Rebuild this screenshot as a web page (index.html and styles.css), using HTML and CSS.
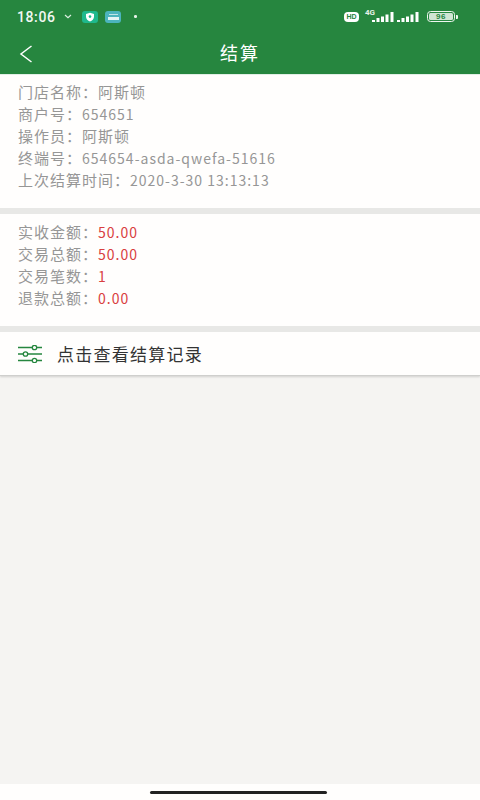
FILE: index.html
```html
<!DOCTYPE html>
<html lang="zh">
<head>
<meta charset="utf-8">
<title>结算</title>
<link rel="stylesheet" href="styles.css">
</head>
<body>
<div class="page">
  <header class="header">
    <div class="status">
      <div class="status-left">
        <span class="time">18:06</span>
        <svg class="chev" width="8" height="5" viewBox="0 0 8 5"><path d="M1 1l3 2.600L7 1" fill="none" stroke="#dcefe0" stroke-width="1.200"/></svg>
        <span class="app app-shield"><svg width="10" height="10" viewBox="0 0 10 10"><path d="M5 .8l4 1.300v2.600C9 7 7.200 8.600 5 9.400 2.800 8.600 1 7 1 4.700V2.100z" fill="#fff"/><circle cx="5" cy="4.600" r="1.300" fill="#1fb88c"/></svg></span>
        <span class="app app-news"><span class="app-line"></span><span class="app-line wide"></span></span>
        <span class="dot"></span>
      </div>
      <div class="status-right">
        <span class="hd">HD</span>
        <span class="net"><span class="net-label">4G</span>
          <svg width="22" height="10" viewBox="0 0 22 10"><path d="M0 8h3v2H0zM4.500 6h3v4h-3zM9 4.500h3V10H9zM13.500 2.500h3V10h-3zM18.500 0h3v10h-3z" fill="#fff"/></svg>
        </span>
        <svg width="22" height="10" viewBox="0 0 22 10"><path d="M0 8h3v2H0zM4.500 6h3v4h-3zM9 4.500h3V10H9zM13.500 2.500h3V10h-3zM18.500 0h3v10h-3z" fill="#fff"/></svg>
        <span class="battery"><span class="battery-level">96</span></span><span class="battery-cap"></span>
      </div>
    </div>
    <div class="nav">
      <svg class="back" width="14" height="18" viewBox="0 0 14 18"><path d="M12.500 1L2 9l10.500 8" fill="none" stroke="#fff" stroke-width="1.500"/></svg>
      <h1 class="title">结算</h1>
    </div>
  </header>

  <section class="card card-store">
    <p class="row">门店名称：阿斯顿</p>
    <p class="row">商户号：<span class="num">654651</span></p>
    <p class="row">操作员：阿斯顿</p>
    <p class="row">终端号：<span class="num">654654-asda-qwefa-51616</span></p>
    <p class="row">上次结算时间：<span class="num">2020-3-30 13:13:13</span></p>
  </section>

  <section class="card card-money">
    <p class="row">实收金额：<span class="num red">50.00</span></p>
    <p class="row">交易总额：<span class="num red">50.00</span></p>
    <p class="row">交易笔数：<span class="num red">1</span></p>
    <p class="row">退款总额：<span class="num red">0.00</span></p>
  </section>

  <div class="record">
    <svg class="filter" width="26" height="18" viewBox="0 0 26 18">
      <g fill="none" stroke="#26863f" stroke-width="1.300">
        <path d="M1 2.500h14M20 2.500h5M1 9h5M11 9h14M1 15.500h14M20 15.500h5"/>
        <circle cx="17.500" cy="2.500" r="2.200"/><circle cx="8.500" cy="9" r="2.200"/><circle cx="17.500" cy="15.500" r="2.200"/>
      </g>
    </svg>
    <span class="record-text">点击查看结算记录</span>
  </div>

  <div class="spacer"></div>
  <footer class="home-area"><span class="home-bar"></span></footer>
</div>
</body>
</html>
```
FILE: styles.css
```css
* { box-sizing: border-box; }
html, body { margin: 0; padding: 0; }
body { font-family: "Noto Sans CJK SC", sans-serif; background: #f5f4f2; }
.page { width: 480px; height: 800px; display: flex; flex-direction: column; overflow: hidden; }

.header { height: 74px; background: #26863f; color: #fff; flex: none; }
.status { height: 32px; padding: 1px 22px 0 17px; display: flex; justify-content: space-between; align-items: center; }
.status-left, .status-right { display: flex; align-items: center; }
.time { font: 500 14px/16px Roboto, sans-serif; letter-spacing: .6px; color: #f2f8f3; width: 47px; }
.chev { margin-right: 10px; }
.app { width: 16px; height: 12px; border-radius: 3px; display: flex; flex-direction: column; align-items: center; justify-content: center; gap: 2px; }
.app-shield { background: #1fb88c; }
.app-news { background: #4cb4bd; margin-left: 7px; }
.app-line { width: 9px; height: 1px; background: #bfe4e6; }
.app-line.wide { width: 11px; height: 3px; background: #e4f4f4; }
.dot { width: 2.500px; height: 2.500px; border-radius: 50%; background: #e6f2e8; margin-left: 13px; }

.status-right { gap: 3px; }
.hd { width: 15px; height: 10px; border-radius: 4px; background: #fff; color: #26863f; font: 700 7px/10px "Liberation Sans", sans-serif; text-align: center; margin-right: 10px; }
.net { display: flex; align-items: flex-end; position: relative; height: 10px; }
.net-label { position: absolute; left: -7px; top: -3px; font: 700 8px/8px Roboto, sans-serif; color: #e6f2e8; }
.battery { width: 28px; height: 11px; margin-left: 5px; border: 1.200px solid #eef6ef; border-radius: 3.500px; padding: 1px; display: flex; }
.battery-level { flex: 1; background: #cfe5d4; border-radius: 1.500px; color: #26863f; font: 700 8px/7px "Liberation Sans", sans-serif; text-align: center; letter-spacing: .5px; }
.battery-cap { width: 2px; height: 4px; background: #eef6ef; margin-left: -2px; border-radius: 0 1px 1px 0; }

.nav { height: 42px; position: relative; display: flex; align-items: center; justify-content: center; }
.back { position: absolute; left: 19px; top: 13px; }
.title { margin: 0 0 2px; font-size: 18px; font-weight: 400; letter-spacing: 2px; line-height: 22px; }

.card { background: #fffefd; padding-left: 18px; flex: none; }
.card-store { height: 134px; padding-top: 7px; border-top: 1px solid #e2efe6; }
.card-money { height: 112px; margin-top: 6px; padding-top: 8px; }
.row { margin: 0; height: 22px; font-size: 15px; line-height: 20px; color: #969696; letter-spacing: 1px; white-space: nowrap; }
.num { font-size: 14px; letter-spacing: 1px; }
.red { color: #d9403f; }

.record { height: 44px; margin-top: 6px; padding-left: 17px; background: #fffefd; display: flex; align-items: center; border-bottom: 1px solid #cfcfcd; box-shadow: 0 1px 2px rgba(0,0,0,.15); flex: none; }
.filter { flex: none; }
.record-text { margin-left: 14px; font-size: 17px; letter-spacing: 1.250px; color: #333; line-height: 20px; }

.card-money, .record { position: relative; }
.card-money::before, .record::before { content: ""; position: absolute; left: 0; right: 0; top: -6px; height: 6px; background: #e8e8e6; }

.spacer { flex: 1; }
.home-area { height: 16px; background: #fffefd; display: flex; justify-content: center; padding: 7px 3px 0 0; flex: none; }
.home-bar { width: 177px; height: 3px; border-radius: 2px; background: #222; }
```
